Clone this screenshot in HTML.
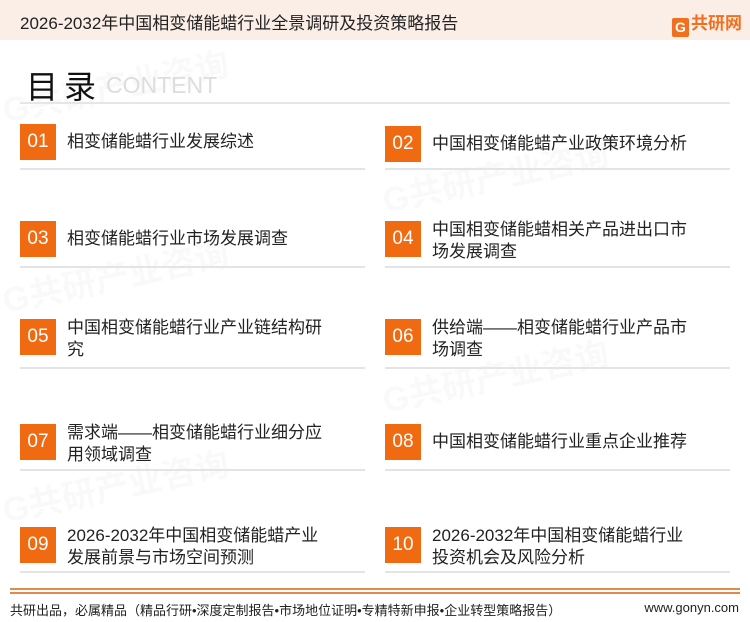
<!DOCTYPE html>
<html><head><meta charset="utf-8"><style>
*{margin:0;padding:0;box-sizing:border-box}
body{width:750px;height:622px;position:relative;background:#fff;font-family:"Liberation Sans","Noto Sans CJK SC",sans-serif;overflow:hidden;color:#222}
.hdr{position:absolute;left:0;top:0;width:750px;height:40px;background:#fbeee6}
.hdr .t{position:absolute;left:20px;top:9px;font-size:17px;color:#222}
.logo{position:absolute;right:8px;top:9px;font-size:17px;font-weight:bold;color:#f07020}
.logo b{display:inline-block;width:17px;height:19px;background:#f07020;color:#fff;font-size:14px;text-align:center;line-height:19px;margin-right:2px;vertical-align:-3px;border-radius:2px}
.ml{position:absolute;left:26px;top:62px;font-size:32px;color:#111;letter-spacing:6px}
.ct{position:absolute;left:106px;top:72px;font-size:23px;color:#ddd}
.hl{position:absolute;left:20px;top:102px;width:710px;height:2px;background:#e6e6e6}
.box{position:absolute;width:36px;height:36px;background:#f06a12;color:#fff;font-size:19px;text-align:center;line-height:36px}
.tx{position:absolute;font-size:17px;line-height:22px;color:#222}
.ul{position:absolute;height:2px;background:#e4e4e4;width:345px}
.f1{position:absolute;left:10px;top:588px;width:730px;height:2px;background:#e08a4c}
.f2{position:absolute;left:10px;top:592px;width:730px;height:2px;background:#e08a4c}
.ft{position:absolute;left:10px;top:600px;font-size:13px;color:#222}
.fr{position:absolute;right:11px;top:600px;font-size:13px;color:#222}
.wm{position:absolute;font-size:34px;font-weight:bold;color:rgba(0,0,0,0.025);transform:rotate(-12deg);white-space:nowrap}
</style></head><body>
<div class="wm" style="left:0;top:60px">G共研产业咨询</div>
<div class="wm" style="left:380px;top:150px">G共研产业咨询</div>
<div class="wm" style="left:0;top:250px">G共研产业咨询</div>
<div class="wm" style="left:380px;top:350px">G共研产业咨询</div>
<div class="wm" style="left:0;top:460px">G共研产业咨询</div>
<div class="hdr"><div class="t">2026-2032年中国相变储能蜡行业全景调研及投资策略报告</div><div class="logo"><b>G</b>共研网</div></div>
<div class="ml">目录</div><div class="ct">CONTENT</div>
<div class="hl"></div>

<div class="box" style="left:20px;top:124px">01</div><div class="tx" style="left:67px;top:131px">相变储能蜡行业发展综述</div>
<div class="box" style="left:385px;top:126px">02</div><div class="tx" style="left:432px;top:133px">中国相变储能蜡产业政策环境分析</div>
<div class="ul" style="left:20px;top:168px"></div><div class="ul" style="left:385px;top:168px"></div>

<div class="box" style="left:20px;top:221px">03</div><div class="tx" style="left:67px;top:228px">相变储能蜡行业市场发展调查</div>
<div class="box" style="left:385px;top:221px">04</div><div class="tx" style="left:432px;top:219px">中国相变储能蜡相关产品进出口市<br>场发展调查</div>
<div class="ul" style="left:20px;top:266px"></div><div class="ul" style="left:385px;top:266px"></div>

<div class="box" style="left:20px;top:319px">05</div><div class="tx" style="left:67px;top:317px">中国相变储能蜡行业产业链结构研<br>究</div>
<div class="box" style="left:385px;top:319px">06</div><div class="tx" style="left:432px;top:317px">供给端——相变储能蜡行业产品市<br>场调查</div>
<div class="ul" style="left:20px;top:367px"></div><div class="ul" style="left:385px;top:367px"></div>

<div class="box" style="left:20px;top:424px">07</div><div class="tx" style="left:67px;top:422px">需求端——相变储能蜡行业细分应<br>用领域调查</div>
<div class="box" style="left:385px;top:424px">08</div><div class="tx" style="left:432px;top:431px">中国相变储能蜡行业重点企业推荐</div>
<div class="ul" style="left:20px;top:469px"></div><div class="ul" style="left:385px;top:469px"></div>

<div class="box" style="left:20px;top:527px">09</div><div class="tx" style="left:67px;top:525px">2026-2032年中国相变储能蜡产业<br>发展前景与市场空间预测</div>
<div class="box" style="left:385px;top:527px">10</div><div class="tx" style="left:432px;top:525px">2026-2032年中国相变储能蜡行业<br>投资机会及风险分析</div>
<div class="ul" style="left:20px;top:571px"></div><div class="ul" style="left:385px;top:571px"></div>

<div class="f1"></div><div class="f2"></div>
<div class="ft">共研出品，必属精品（精品行研•深度定制报告•市场地位证明•专精特新申报•企业转型策略报告）</div>
<div class="fr">www.gonyn.com</div>
</body></html>
